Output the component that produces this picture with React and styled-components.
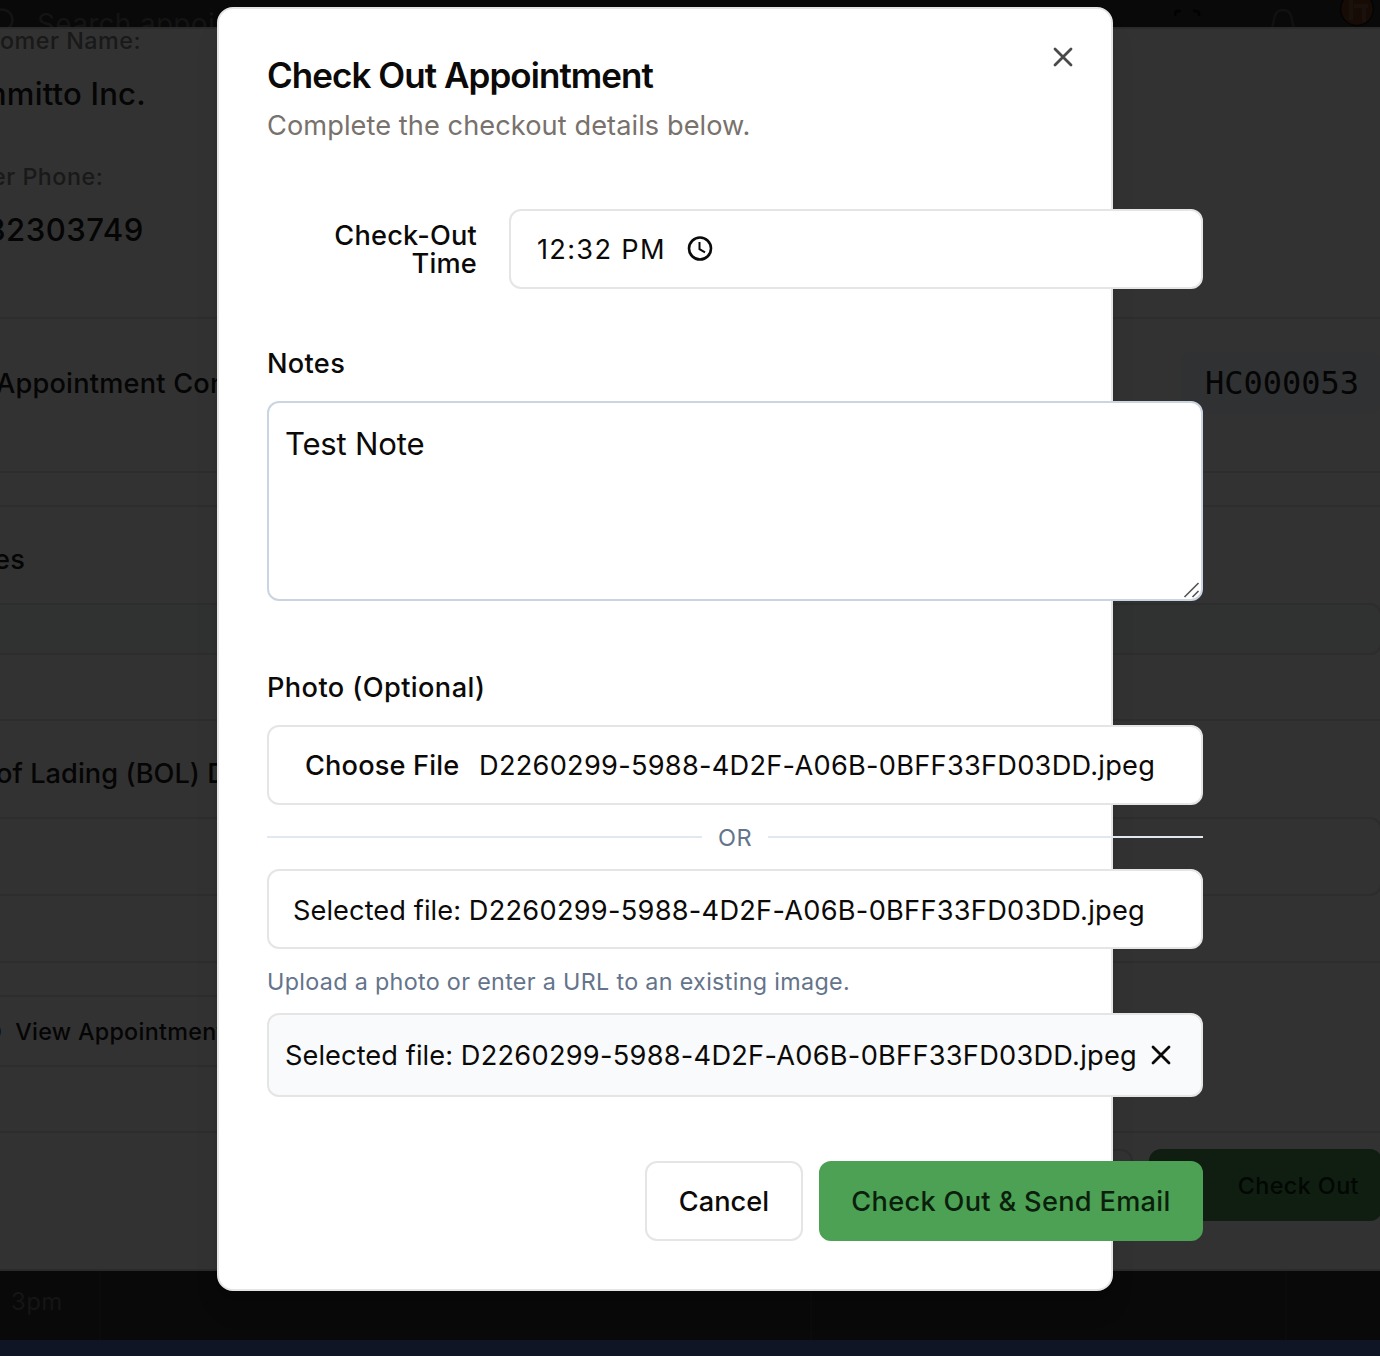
import React from "react";
import styled, { createGlobalStyle } from "styled-components";

const GlobalStyle = createGlobalStyle`
  * { box-sizing: border-box; }
  body { margin: 0; background: #090909; overflow: hidden; font-family: Inter, "Liberation Sans", sans-serif; }
`;

const Screen = styled.div`
  position: relative;
  width: 1380px;
  height: 1356px;
  overflow: hidden;
  display: flex;
  flex-direction: column;
`;

const TopBar = styled.header`
  height: 27px;
  flex: none;
  display: flex;
  align-items: flex-start;
  overflow: hidden;
  background: #090909;
  svg { flex: none; }
`;

const SearchText = styled.span`
  font-size: 28px;
  line-height: 28px;
  letter-spacing: 0.3px;
  margin: 10px auto 0 21px;
  color: #141414;
`;

const Sheet = styled.main`
  height: 1244px;
  flex: none;
  display: flex;
  flex-direction: column;
  background: #323232;
  border-top: 2px solid #2b2b2b;
  border-bottom: 2px solid #2b2b2b;
`;

const Section = styled.section`
  height: ${(p) => p.$h}px;
  flex: none;
  padding-top: ${(p) => p.$pt || 0}px;
  border-bottom: 2px solid #2d2d2d;
`;

const BgLine = styled.div`
  display: flex;
  align-items: center;
  white-space: nowrap;
  height: ${(p) => p.$h}px;
  margin-left: ${(p) => p.$x}px;
  font-size: ${(p) => p.$size}px;
  font-weight: ${(p) => p.$weight || 500};
  letter-spacing: ${(p) => p.$ls || 0}px;
  color: ${(p) => p.$color || "#050505"};
`;

const CodeBadge = styled.span`
  margin-left: auto;
  width: 199px;
  flex: none;
  height: 62px;
  padding-left: 24px;
  display: flex;
  align-items: center;
  border-radius: 10px;
  background: #303132;
  font-family: "DejaVu Sans Mono", monospace;
  font-size: 32px;
  font-weight: 400;
  letter-spacing: 0;
`;

const InsetBox = styled.div`
  width: 1420px;
  height: ${(p) => p.$h}px;
  margin: ${(p) => p.$mt}px 0 0 -38px;
  border: 2px solid #2d2d2d;
  border-radius: 12px;
  background: ${(p) => p.$bg || "transparent"};
`;

const OutlineButton = styled.div`
  width: 340px;
  height: 72px;
  margin: 32px 0 0 -40px;
  border: 2px solid #2d2d2d;
  border-radius: 12px;
  display: flex;
  align-items: center;
`;

const SheetActions = styled.div`
  display: flex;
  justify-content: flex-end;
  gap: 16px;
  padding-top: 16px;
  margin-right: -2px;
`;

const SheetButton = styled.div`
  width: ${(p) => p.$w}px;
  height: 72px;
  border-radius: 12px;
  border: 2px solid ${(p) => (p.$green ? "#0f1e11" : "#2d2d2d")};
  background: ${(p) => (p.$green ? "#0f1e11" : "transparent")};
  display: flex;
  align-items: center;
  justify-content: flex-end;
  padding-right: 21px;
  font-size: 23.3px;
  font-weight: 500;
  letter-spacing: 0.45px;
  color: #030703;
`;

const CalendarRow = styled.div`
  height: 69px;
  flex: none;
  display: flex;
  background: #090909;
`;

const HourCell = styled.div`
  width: 101px;
  padding: 17px 0 0 11px;
  border-right: 2px solid #0b0b0b;
  font-size: 24px;
  line-height: 28px;
  letter-spacing: 0.4px;
  color: #151515;
`;

const DayCell = styled.div`
  width: ${(p) => p.$w}px;
  border-right: 2px solid #0b0b0b;
`;

const EventStrip = styled.div`
  height: 16px;
  flex: none;
  background: #0f1524;
`;

const Dialog = styled.div`
  position: absolute;
  left: 217px;
  top: 7px;
  width: 896px;
  height: 1284px;
  padding: 48px;
  border: 2px solid #e5e5e5;
  border-radius: 16px;
  background: #fff;
  color: #0c0a09;
  box-shadow: 0 20px 30px -6px rgba(0, 0, 0, 0.1), 0 8px 12px -8px rgba(0, 0, 0, 0.1);
`;

const CloseButton = styled.button`
  position: absolute;
  right: 32px;
  top: 32px;
  width: 32px;
  height: 32px;
  padding: 0;
  border: 0;
  background: none;
  color: #4b4a49;
`;

const Title = styled.h2`
  margin: 0;
  font-size: 35px;
  line-height: 36px;
  font-weight: 600;
  letter-spacing: ${(p) => p.$ls}px;
`;

const Description = styled.p`
  margin: 13px 0 63px;
  font-size: 27.2px;
  line-height: 40px;
  color: #78716c;
  letter-spacing: ${(p) => p.$ls}px;
`;

const Form = styled.form`
  width: 936px;
  display: flex;
  flex-direction: column;
`;

const TimeRow = styled.div`
  display: grid;
  grid-template-columns: 210px 694px;
  gap: 32px;
  align-items: center;
`;

const Label = styled.label`
  display: block;
  font-size: 27.2px;
  line-height: 28px;
  font-weight: 500;
  letter-spacing: ${(p) => p.$ls || 0}px;
  margin-top: ${(p) => p.$mt || 0}px;
  padding-top: ${(p) => (p.$right ? 2 : 0)}px;
  text-align: ${(p) => (p.$right ? "right" : "left")};
`;

const Field = styled.div`
  height: ${(p) => p.$h || 80}px;
  display: flex;
  align-items: center;
  white-space: pre;
  border: 2px solid #e5e5e5;
  border-radius: 12px;
  background: ${(p) => p.$bg || "#fff"};
  padding-left: ${(p) => p.$pl}px;
  padding-top: ${(p) => p.$pt || 0}px;
  margin-top: ${(p) => p.$mt || 0}px;
  font-size: 27.2px;
  letter-spacing: ${(p) => p.$ls || 0}px;
  svg { flex: none; margin-left: ${(p) => p.$iconGap || 0}px; }
`;

const FileName = styled.span`
  letter-spacing: 0.26px;
`;

const ChooseFile = styled.span`
  font-weight: 500;
  letter-spacing: ${(p) => p.$ls}px;
  width: 174px;
`;

const NotesBox = styled.div`
  height: 200px;
  margin-top: 23px;
  padding: 21px 17px 21px 16px;
  display: flex;
  justify-content: space-between;
  border: 2px solid #cbd5e1;
  border-radius: 12px;
  background: #fff;
  font-size: 31.1px;
  line-height: 40px;
  letter-spacing: ${(p) => p.$ls}px;
  svg { align-self: flex-end; margin: 0 -17px -21px 0; }
`;

const Divider = styled.div`
  display: flex;
  align-items: center;
  gap: 16px;
  height: 64px;
  font-size: 23.5px;
  color: #64748b;
  letter-spacing: ${(p) => p.$ls}px;
  &::before, &::after { content: ""; flex: 1; height: 2px; background: #e2e8f0; }
`;

const Hint = styled.p`
  margin: 17px 0 15px;
  font-size: 23.3px;
  line-height: 32px;
  color: #64748b;
  letter-spacing: ${(p) => p.$ls}px;
`;

const Actions = styled.div`
  display: flex;
  justify-content: flex-end;
  gap: 16px;
  margin-top: 64px;
`;

const Button = styled.button`
  width: ${(p) => p.$w}px;
  height: 80px;
  padding: 0;
  font-family: inherit;
  font-size: 27.2px;
  font-weight: 500;
  white-space: nowrap;
  letter-spacing: ${(p) => p.$ls}px;
  border: 2px solid ${(p) => (p.$primary ? "#4ca154" : "#e5e5e5")};
  border-radius: 12px;
  background: ${(p) => (p.$primary ? "#4ca154" : "#fff")};
  color: ${(p) => (p.$primary ? "#0b1f0c" : "#0c0a09")};
`;

const Cross = ({ size, width }) => (
  <svg width={size} height={size} viewBox="0 0 24 24" fill="none" stroke="currentColor" strokeWidth={width} strokeLinecap="round" strokeLinejoin="round">
    <path d="M18 6 6 18M6 6l12 12" />
  </svg>
);

const FILE = "D2260299-5988-4D2F-A06B-0BFF33FD03DD.jpeg";

export default function App() {
  return (
    <>
      <GlobalStyle />
      <Screen>
        <TopBar>
          <svg width="16" height="27" fill="none" stroke="#141414" strokeWidth="2.5">
            <circle cx="2" cy="20" r="10.5" />
          </svg>
          <SearchText>Search appointments</SearchText>
          <svg width="206" height="27" fill="none" strokeWidth="2.6">
            <path d="M1 16v-2q0-3 3-3h3M19 11h3q3 0 3 3v2" stroke="#020202" />
            <path d="M98 27c3-4 0-17 11-17s8 13 11 17" stroke="#111" />
            <circle cx="183" cy="9" r="16.5" fill="#160b05" stroke="#040404" strokeWidth="1.5" />
            <path d="M177 0v20M190 8v14M180 6h14" stroke="#1b110c" strokeWidth="4" />
          </svg>
        </TopBar>

        <Sheet>
          <Section $h={290}>
            <BgLine $h={23} $x={0} $size={23.3} $ls={0.5} $color="#191919">omer Name:</BgLine>
            <BgLine $h={83} $x={-21} $size={31.1} $ls={0.2}>mmitto Inc.</BgLine>
            <BgLine $h={82} $x={-8} $size={23.3} $ls={0.5} $color="#191919">er Phone:</BgLine>
            <BgLine $h={25} $x={-14} $size={31.1} $ls={0.5}>82303749</BgLine>
          </Section>
          <Section $h={154} $pt={32}>
            <BgLine $h={64} $x={-4} $size={27.2} $ls={0.2}>
              Appointment Confirmation
              <CodeBadge>HC000053</CodeBadge>
            </BgLine>
          </Section>
          <Section $h={34} />
          <Section $h={214} $pt={38}>
            <BgLine $h={28} $x={-6} $size={27.2} $ls={0.3}>es</BgLine>
            <InsetBox $h={52} $mt={30} $bg="#303131" />
          </Section>
          <Section $h={242} $pt={38}>
            <BgLine $h={28} $x={-4} $size={27.2} $ls={0.05}>of Lading (BOL) Document</BgLine>
            <InsetBox $h={79} $mt={30} />
          </Section>
          <Section $h={170}>
            <OutlineButton>
              <BgLine $h={68} $x={22} $size={23.3} $ls={0.3}>
                O&nbsp; View Appointments
              </BgLine>
            </OutlineButton>
          </Section>
          <SheetActions>
            <SheetButton $w={180} />
            <SheetButton $w={233} $green>Check Out</SheetButton>
          </SheetActions>
        </Sheet>

        <CalendarRow>
          <HourCell>3pm</HourCell>
          <DayCell $w={711} />
          <DayCell $w={475} />
        </CalendarRow>
        <EventStrip />

        <Dialog>
          <CloseButton type="button" aria-label="Close"><Cross size={32} width={2.1} /></CloseButton>
          <Title $ls={-0.95}>Check Out Appointment</Title>
          <Description $ls={0.07}>Complete the checkout details below.</Description>
          <Form>
            <TimeRow>
              <Label $right $ls={0.2}>Check-Out Time</Label>
              <Field $pl={26} $ls={1.3} $iconGap={20}>
                12:32 PM
                <svg width="28" height="28" viewBox="0 0 28 28" fill="none" stroke="#0a0a0a" strokeWidth="2.6">
                  <circle cx="14" cy="13.5" r="11" />
                  <path d="M13.500 7v7.200l5.500 3.200" strokeWidth="2" />
                </svg>
              </Field>
            </TimeRow>
            <Label $mt={61} $ls={0.3}>Notes</Label>
            <NotesBox $ls={-0.2}>
              Test Note
              <svg width="18" height="18" viewBox="0 0 18 18" stroke="#555" strokeWidth="1.6">
                <path d="M1.500 16 15.500 2M9.500 16l6-6" />
              </svg>
            </NotesBox>
            <Label $mt={73} $ls={0.4}>Photo (Optional)</Label>
            <Field $mt={23} $pl={36} $ls={0.24}>
              <ChooseFile $ls={0.15}>Choose File</ChooseFile>
              <FileName>{FILE}</FileName>
            </Field>
            <Divider $ls={0.5}>OR</Divider>
            <Field $pl={24} $pt={2} $ls={0.08}>
              <span>Selected file: <FileName>{FILE}</FileName></span>
            </Field>
            <Hint $ls={0.33}>Upload a photo or enter a URL to an existing image.</Hint>
            <Field $h={84} $pl={16} $ls={0.08} $bg="#f8fafc" $iconGap={8}>
              <span>Selected file: <FileName>{FILE}</FileName></span>
              <Cross size={32} width={2.1} />
            </Field>
            <Actions>
              <Button type="button" $w={158} $ls={0.05}>Cancel</Button>
              <Button type="button" $w={384} $ls={0.3} $primary>Check Out &amp; Send Email</Button>
            </Actions>
          </Form>
        </Dialog>
      </Screen>
    </>
  );
}
